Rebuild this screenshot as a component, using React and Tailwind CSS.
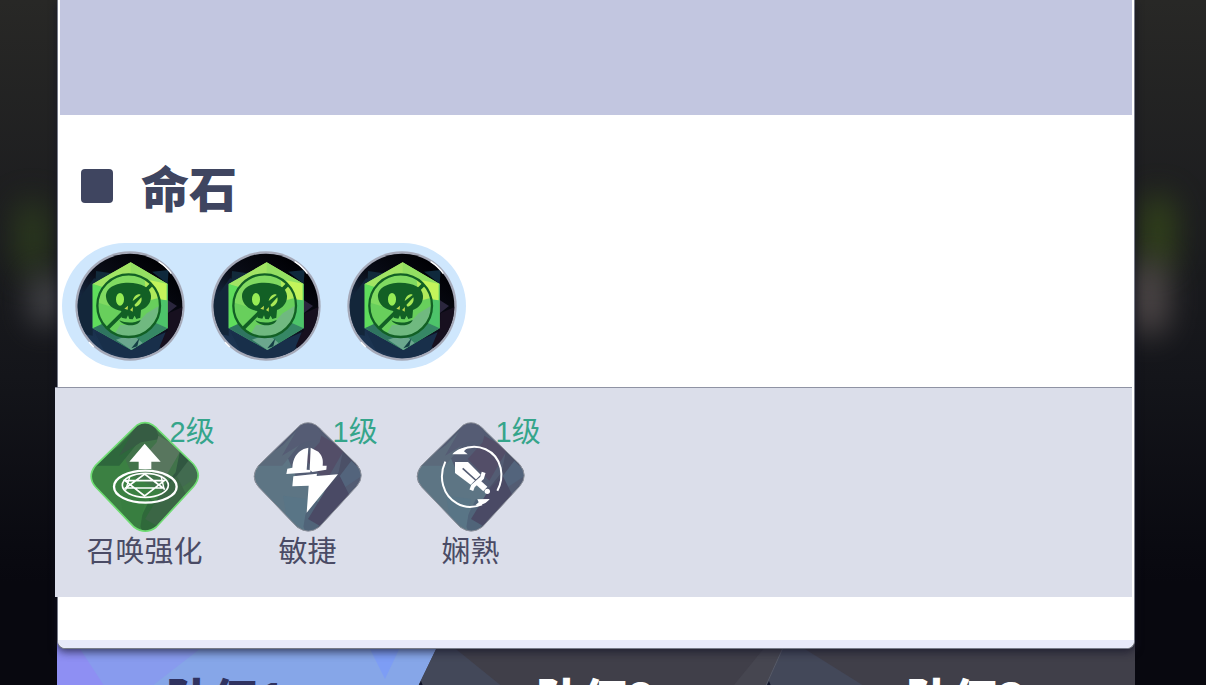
import { useState } from 'react';

const STONES = ['stone-1', 'stone-2', 'stone-3'];
const TEAMS = ['队伍1', '队伍2', '队伍3'];

// Skull stone: green hexagon crystal on a dark disc
function StoneIcon({ id }) {
  return (
    <svg viewBox="15 18 330 330" className="block size-[110px]" aria-hidden="true">
      <defs>
        <linearGradient id={`${id}-gem`} x1="0.7" y1="0" x2="0.4" y2="1">
          <stop offset="0" stopColor="#b4f357" />
          <stop offset="0.3" stopColor="#7fe25f" />
          <stop offset="0.7" stopColor="#4fc662" />
          <stop offset="1" stopColor="#4d9c7c" />
        </linearGradient>
        <linearGradient id={`${id}-disc`} x1="0.8" y1="0.1" x2="0.2" y2="0.9">
          <stop offset="0" stopColor="#000004" />
          <stop offset="0.45" stopColor="#0a0d18" />
          <stop offset="0.75" stopColor="#172b45" />
          <stop offset="1" stopColor="#1c3552" />
        </linearGradient>
        <clipPath id={`${id}-clip`}><circle cx="180" cy="183" r="157" /></clipPath>
      </defs>
      <circle cx="180" cy="183" r="164" fill="#a5a9b8" />
      <circle cx="180" cy="183" r="157" fill={`url(#${id}-disc)`} />
      <g clipPath={`url(#${id}-clip)`}>
        <path d="M20 170 72 100l50 12-54 30v130l-48-10Z" fill="#13263a" />
        <path d="M78 78l42 6 26-5-70 40Z" fill="#122a3a" />
        <path d="M246 80l50-5-3 42Z" fill="#0f293c" />
        <path d="M293 165l28 18-28 22Z" fill="#2a263d" />
        <path d="M295 205l45-20v90l-60 45-20-35 33-27Z" fill="#17101f" />
        <path d="M75 262l100 50 112-50-28 67-78 15-80-30Z" fill="#182f4a" />
      </g>
      <path d="M182 52 293 117v133l-109 65L68 250V117Z" fill={`url(#${id}-gem)`} />
      <path d="M182 52 68 117l36 11 78-36Z" fill="#a2e464" />
      <path d="M182 52l111 65-32 10-79-35Z" fill="#93df62" />
      <path d="M68 117l36 11-5 112-31 10Z" fill="#5fdd5c" />
      <path d="M293 117v133l-33-15V127Z" fill="#4dc46a" />
      <path d="M68 250l34-16 80 46 2 35Z" fill="#2f7560" />
      <path d="M293 250l-35-16-76 46 2 35Z" fill="#368765" />
      <path d="M138 284l46 31 34-21-32-26Z" fill="#6ba78e" />
      <path d="M184 310l24-30-6 24Z" fill="#143f45" />
      <path d="M240 106l50 10v50l-28-4Z" fill="#c3f45b" />
      <circle cx="176" cy="182" r="93" fill="#68cf5c" />
      <path d="M176 89a93 93 0 0 1 90 70c-32 5-60 32-99 39l-82-25a93 93 0 0 1 91-84Z" fill="#80da61" />
      <path d="M224 102c24 14 38 33 43 56l-35 9-6-42Z" fill="#b0ea5a" />
      <path d="M230 205l36-22c0 48-37 90-90 92-16 0-30-3-41-10l15-25h47Z" fill="#70b980" />
      <path d="M112 250 245 118" stroke="#126025" strokeWidth="11" />
      <path d="M175 113c39 0 67 15 68 39 1 22-13 36-30 43l-2 23-12 4-5-10-6 11-10-1-4-11-5 10-14-3-1-20c-24-4-44-18-46-42-2-27 28-43 67-43Z" fill="#126025" />
      <ellipse cx="150" cy="163" rx="12" ry="19" fill="#96ec55" />
      <path d="M188 168c3-14 13-22 22-20l2 2ZM193 180l21-23c4 13-6 26-17 28Z" fill="#a8e856" />
      <path d="M163 191l11-9-1 12ZM180 195l9-9-1 14Z" fill="#bad94d" />
      <path d="M148 226c19 9 43 9 64-1-6 20-50 22-64 1Z" fill="#126025" />
      <circle cx="176" cy="182" r="94" fill="none" stroke="#126025" strokeWidth="7" />
      <path d="M266 50c16 10 28 22 38 36M57 292l14 14" fill="none" stroke="#fff" strokeWidth="4" />
    </svg>
  );
}

// Rounded diamond shared by every skill, with faceted shading
const DIAMOND = 'M172 58q23-14 46 0 11 7 19 17l103 100q29 35 1 67L229 364q-33 25-67 0L47 244q-27-31 0-65L157 72Z';

function SkillDiamond({ id, green, children }) {
  return (
    <svg viewBox="27 46 336 336" className="block size-28" aria-hidden="true">
      <defs>
        <clipPath id={`${id}-shape`}><path d={DIAMOND} /></clipPath>
      </defs>
      <g clipPath={`url(#${id}-shape)`}>
        <path d="M20 40h350v350H20Z" fill={green ? '#41734a' : '#535c73'} />
        <path d="M20 200 118 120l40 90 110 60-80 120H20Z" fill={green ? '#3b8042' : '#5d7584'} />
        <path d="M118 120 195 40l-20 70-57 70-88 0Z" fill={green ? '#2e673c' : '#5b6a7b'} />
        <path d="M175 50l40-10 25 60-57 10-66 40Z" fill={green ? '#365c43' : '#555c74'} />
        <path d="M235 90l70 40-55 95-65-65 45-50Z" fill={green ? '#58765e' : '#534e68'} />
        <path d="M302 126l70 80-125 44 40-50Z" fill={green ? '#315741' : '#4b5067'} />
        <path d="M325 165l40 40-75 50-18-20Z" fill={green ? '#426b50' : '#53647c'} />
        <path d="M175 350l35-70 60 35-75 80Z" fill={green ? '#2f693a' : '#506479'} />
        <path d="M250 250l40-40 30 60-90 90-35-20Z" fill={green ? '#3b6645' : '#4a4a65'} />
        <path d="M120 270l75 10-15 90-50-40Z" fill={green ? '#387e40' : '#597586'} />
      </g>
      <path d={DIAMOND} fill="none" stroke={green ? '#6fdc73' : '#8e929c'} strokeWidth={green ? 5 : 3} />
      {children}
    </svg>
  );
}

function SummonGlyph() {
  return (
    <>
      <path d="M194 114l48 54h-28v22h-38v-22h-28Z" fill="#fff" />
      <g fill="none" stroke="#fff">
        <ellipse cx="196" cy="243" rx="94" ry="48" strokeWidth="7" />
        <ellipse cx="196" cy="239" rx="69" ry="36" strokeWidth="5" />
        <path d="M194 205l55 42H137ZM194 271l-59-46h118Z" strokeWidth="5" />
        <path d="M150 211l-13 42M243 211l10 42" strokeWidth="4" />
      </g>
    </>
  );
}

// Winged helmet over a lightning bolt
function AgilityGlyph() {
  return (
    <g transform="translate(-8 0)" fill="#fff">
      <path d="M190 130l14-4-5 66 12 1-1 7-72 5 3-16 15-3c2-28 13-46 34-56Z" />
      <path d="M211 126l23 12c13 13 15 26 13 42h12l-1 12-42 7-8-7Z" />
      <path d="M159 212l71-8-1 7 64-5-94 115 6-81-49 2Z" />
    </g>
  );
}

// Sword inside a turning ring
function MasteryGlyph() {
  return (
    <>
      <g fill="none" stroke="#fff" strokeWidth="6">
        <path d="M165 133c50-25 107 1 119 54 5 24 2 46-10 68" />
        <path d="M118 168c-22 47-7 102 35 125 24 14 51 13 75 3" />
      </g>
      <path d="M139 146c13-14 29-20 45-21l-10 12 11 9ZM251 280c-10 13-23 19-43 19l10-9-4-9Z" fill="#fff" />
      <path d="M147 169h39l38 38-30 30-47-35Z" fill="#fff" />
      <path d="M170 188l42 38" stroke="#535c73" strokeWidth="5" />
      <path d="M233 200l-5 17-27 24-5 13" fill="none" stroke="#fff" strokeWidth="12" />
      <path d="M214 228l24 22" stroke="#fff" strokeWidth="18" />
      <circle cx="244" cy="257" r="8" fill="#fff" />
    </>
  );
}

const SKILLS = [
  { id: 'summon', name: '召唤强化', level: '2级', green: true, Glyph: SummonGlyph },
  { id: 'agility', name: '敏捷', level: '1级', green: false, Glyph: AgilityGlyph },
  { id: 'mastery', name: '娴熟', level: '1级', green: false, Glyph: MasteryGlyph },
];

// Faceted artwork behind the team tabs
function TabArtwork() {
  return (
    <svg viewBox="57 640 1078 60" preserveAspectRatio="none" className="absolute inset-0 h-full w-full" aria-hidden="true">
      <path d="M57 640h1078v60H57Z" fill="#403f49" />
      <path d="M57 640h383l-29 60H57Z" fill="#86a6e8" />
      <path d="M57 640h153l-77 60H57Z" fill="#889bee" />
      <path d="M57 640h18l39 60H57Z" fill="#8e8ff3" />
      <path d="M366 640h37l-18 38Z" fill="#7d9df5" />
      <path d="M440 640h6l74 60H411Z" fill="#434859" />
      <path d="M770 640h16l-27 60h-38Z" fill="#464650" />
      <path d="M786 640h6l96 60H759Z" fill="#434859" />
      <path d="M786 640l-27 60" stroke="#575b68" />
      <path d="M421 680l8 20h-18ZM769 680l8 20h-18Z" fill="#10142a" />
    </svg>
  );
}

export default function App() {
  const [team, setTeam] = useState(0);

  return (
    <div className="h-screen overflow-hidden bg-white pr-[14px] font-['Noto_Sans_CJK_SC','Noto_Sans',sans-serif]">
      <div className="relative h-full overflow-hidden bg-linear-to-b from-[#282826] via-[#14151a] via-55% to-[#08080f] to-85%">
        {/* blurred scenery at both edges */}
        <div className="absolute top-[200px] left-4 h-[75px] w-8 rounded-full bg-[#344a1d] opacity-70 blur-lg" />
        <div className="absolute top-[275px] left-8 h-[50px] w-7 rounded-full bg-[#77777b] opacity-60 blur-lg" />
        <div className="absolute top-[195px] right-8 h-[75px] w-8 rounded-full bg-[#3b5219] opacity-80 blur-lg" />
        <div className="absolute top-[260px] right-10 h-[75px] w-8 rounded-full bg-[#675d5c] opacity-80 blur-lg" />

        <div className="relative mr-[71px] ml-[57px]">
          <main className="relative z-10 rounded-b-lg border border-t-0 border-[#777b88] bg-white shadow-[0_3px_8px_rgba(20,20,40,0.7)]">
            <div className="mx-[2px] h-[115px] bg-[#c2c6e0]" />

            <section className="pt-11 pb-[18px] pl-1">
              <div className="flex items-center gap-7 pl-[19px]">
                <span className="h-[34px] w-8 rounded-sm bg-[#3f4560]" />
                <h2 className="text-[48px] leading-[54px] font-black text-[#3f4560]">命石</h2>
              </div>
              <div className="mt-[30px] flex w-fit gap-[26px] rounded-full bg-[#cfe7fd] py-2 pr-[9px] pl-[13px]">
                {STONES.map(id => <StoneIcon key={id} id={id} />)}
              </div>
            </section>

            <section className="mr-[2px] -ml-[3px] border-t border-[#8f93a4] bg-[#dbdeea] pt-[33px] pb-[31px] pl-2">
              <ul className="flex">
                {SKILLS.map(({ id, name, level, green, Glyph }) => (
                  <li key={id} className="flex w-[163px] flex-col items-center">
                    <div className="relative">
                      <SkillDiamond id={id} green={green}><Glyph /></SkillDiamond>
                      <span className="absolute -top-[5px] left-[81px] font-['Liberation_Sans','Noto_Sans_CJK_SC',sans-serif] text-[29px] leading-8 whitespace-nowrap text-[#35a58b]">{level}</span>
                    </div>
                    <span className="text-[29px] leading-[33px] text-[#4a4b65]">{name}</span>
                  </li>
                ))}
              </ul>
            </section>

            <div className="h-[43px]" />
            <div className="h-2 rounded-b-lg bg-[#e8eafa]" />
          </main>

          <nav className="relative -mt-2 flex h-[60px] overflow-hidden">
            <TabArtwork />
            {TEAMS.map((name, i) => (
              <button
                key={name}
                type="button"
                onClick={() => setTeam(i)}
                className={`relative pt-[30px] text-[46px] leading-[52px] font-black whitespace-nowrap
                  ${i === 1 ? 'flex-[402]' : 'flex-[338]'}
                  ${i === team ? 'text-[#2f3260]' : 'text-white'}`}
              >
                {name}
              </button>
            ))}
          </nav>
        </div>
      </div>
    </div>
  );
}
